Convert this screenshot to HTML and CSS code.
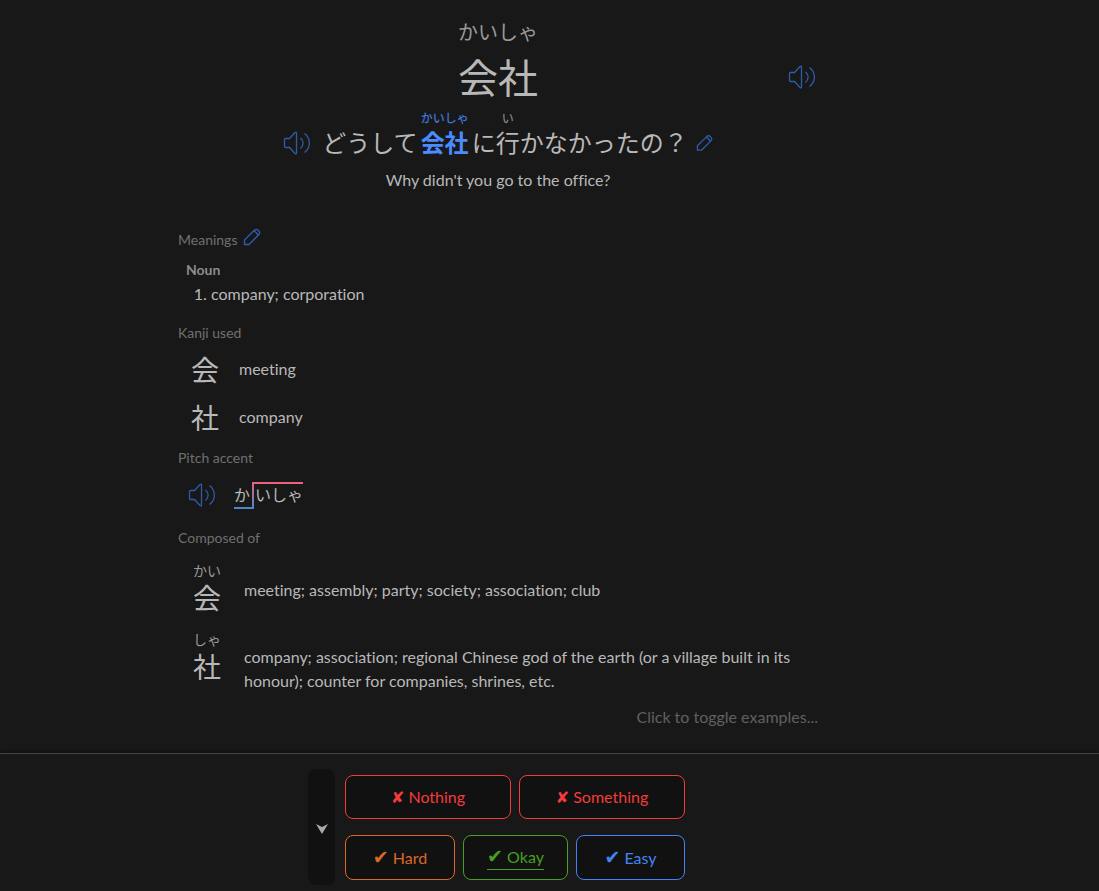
FILE: index.html
```html
<!DOCTYPE html>
<html lang="en">
<head>
<meta charset="utf-8">
<meta name="viewport" content="width=device-width, initial-scale=1">
<title>会社 – Review</title>
<link rel="stylesheet" href="styles.css">
</head>
<body>
<svg class="symbols" aria-hidden="true">
  <symbol id="speaker" viewBox="0 0 28 24"><path d="M1.500 8.500v7q0 1 1 1h4l5.500 6q1.500 1 1.500-.5v-20q0-1.500-1.500-.5l-5.500 6h-4q-1 0-1 1zM17.500 7c3.500 3 3.500 7 0 10.500M21.500 2.500c6.500 5 6.500 14 0 19"/></symbol>
  <symbol id="pencil" viewBox="0 0 18 18"><path d="M1.500 16.500v-4.500l10-10q2-1.500 4 .5t.5 4l-10 10zM10.500 3q3 .5 4.500 4.500"/></symbol>
</svg>
<main class="card">
  <header class="headword">
    <ruby class="word" lang="ja">会社<rt>かいしゃ</rt></ruby>
    <button class="icon-button headword-audio" aria-label="Play word"><svg class="speaker"><use href="#speaker"/></svg></button>
  </header>
  <div class="sentence-row">
    <button class="icon-button" aria-label="Play sentence"><svg class="speaker"><use href="#speaker"/></svg></button>
    <p class="sentence" lang="ja"><span>どうして</span><ruby class="target">会社<rt>かいしゃ</rt></ruby><span>に</span><ruby>行<rt>い</rt></ruby><span>かなかったの？</span></p>
    <button class="icon-button" aria-label="Edit sentence"><svg class="pencil"><use href="#pencil"/></svg></button>
  </div>
  <p class="translation">Why didn't you go to the office?</p>

  <section class="meanings">
    <h2 class="label">Meanings <button class="icon-button" aria-label="Edit meanings"><svg class="pencil"><use href="#pencil"/></svg></button></h2>
    <h3 class="part">Noun</h3>
    <ol class="senses"><li>company; corporation</li></ol>
  </section>

  <section class="kanji">
    <h2 class="label">Kanji used</h2>
    <div class="kanji-row"><span class="glyph" lang="ja">会</span><span>meeting</span></div>
    <div class="kanji-row"><span class="glyph" lang="ja">社</span><span>company</span></div>
  </section>

  <section class="pitch">
    <h2 class="label">Pitch accent</h2>
    <div class="pitch-row">
      <button class="icon-button" aria-label="Play pitch accent"><svg class="speaker"><use href="#speaker"/></svg></button>
      <div class="accent" lang="ja"><span class="low">か</span><span class="rise"></span><span class="high">いしゃ</span></div>
    </div>
  </section>

  <section class="composed">
    <h2 class="label">Composed of</h2>
    <div class="part-list">
      <div class="part-row"><ruby class="component" lang="ja">会<rt>かい</rt></ruby><p>meeting; assembly; party; society; association; club</p></div>
      <div class="part-row"><ruby class="component" lang="ja">社<rt>しゃ</rt></ruby><p>company; association; regional Chinese god of the earth (or a village built in its honour); counter for companies, shrines, etc.</p></div>
    </div>
  </section>
  <button class="toggle">Click to toggle examples...</button>
</main>
<footer class="review">
  <div class="review-inner">
    <button class="collapse" aria-label="More options"><svg class="chevron" viewBox="0 0 12 10"><path d="M0 0l6 3 6-3-6 10z"/></svg></button>
    <div class="grades">
      <div class="fails">
        <button class="grade fail"><span><i>✘</i> Nothing</span></button>
        <button class="grade fail"><span><i>✘</i> Something</span></button>
      </div>
      <div class="passes">
        <button class="grade hard"><span><i>✔</i> Hard</span></button>
        <button class="grade okay"><span><i>✔</i> Okay</span></button>
        <button class="grade easy"><span><i>✔</i> Easy</span></button>
      </div>
    </div>
  </div>
</footer>
</body>
</html>
```
FILE: styles.css
```css
* { box-sizing: border-box; }

body {
  margin: 0;
  min-height: 100vh;
  display: flex;
  flex-direction: column;
  background: #181818;
  color: #b8b8b8;
  font: 16px/24px Lato, "Noto Sans CJK JP", sans-serif;
  font-variant-ligatures: none;
}

h2, h3, p, ol { margin: 0; padding: 0; }

button {
  padding: 0;
  border: 0;
  background: none;
  color: inherit;
  font: inherit;
  cursor: pointer;
}

[lang="ja"] { font-family: "Noto Sans CJK JP", sans-serif; }

ruby {
  display: inline-flex;
  flex-direction: column-reverse;
  align-items: center;
}

rt { display: block; color: #999; }

.symbols { position: absolute; width: 0; height: 0; }

.icon-button { display: flex; }

.speaker, .pencil {
  fill: none;
  stroke: #2f5ba8;
}

.speaker { width: 28px; height: 24px; stroke-width: 1.3; }
.pencil { width: 18px; height: 18px; stroke-width: 1.4; }

.card {
  flex: 1;
  width: 100%;
  max-width: 640px;
  margin-left: max(0px, calc((100% - 743px) / 2));
  padding-top: 16px;
}

.headword {
  display: grid;
  grid-template-columns: 1fr auto 1fr;
  align-items: center;
}

.word { grid-column: 2; font-size: 40px; line-height: 56px; }
.word rt { font-size: 20px; line-height: 32px; }
.headword-audio { justify-self: end; padding: 34px 2px 0 0; }

.sentence-row {
  display: flex;
  justify-content: center;
  align-items: flex-end;
  gap: 8px;
  margin-top: 4px;
}

.sentence-row .icon-button { height: 34px; align-items: center; }
.sentence-row .pencil { width: 17px; }

.sentence {
  display: flex;
  align-items: flex-end;
  padding-left: 3px;
  font-size: 24px;
  line-height: 32px;
  padding-bottom: 2px;
}

.sentence rt { font-size: 12px; line-height: 16px; margin-top: 2px; }
.target { margin: 0 3px; color: #4a8cff; font-weight: 700; }
.target rt { color: #3f74d8; font-weight: 500; }

.translation { margin-top: 8px; text-align: center; }

.label {
  display: flex;
  gap: 6px;
  color: #707070;
  font-size: 14px;
  line-height: 24px;
  font-weight: 400;
}

.meanings { margin-top: 36px; }

.part {
  margin-top: 8px;
  padding-left: 8px;
  color: #8c8c8c;
  font-size: 14px;
  line-height: 20px;
}

.senses { margin-top: 2px; padding-left: 33px; }

.kanji { margin-top: 15px; }

.kanji-row { display: flex; align-items: center; gap: 20px; height: 48px; padding-left: 13px; }
.glyph { font-size: 28px; line-height: 48px; }

.pitch { margin-top: 5px; }
.pitch-row { display: flex; align-items: center; gap: 18px; height: 50px; padding-left: 10px; }
.accent { display: flex; line-height: 20px; }
.low { padding: 2px 2px 3px 0; border-bottom: 2px solid #4a86cc; }
.rise { width: 2px; background: linear-gradient(#e8637b, #4a86cc); }
.high { padding-left: 1px; border-top: 2px solid #e8637b; }

.composed { margin-top: 6px; }
.part-list { display: grid; gap: 3px; margin-top: 8px; }
.part-row { display: grid; grid-template-columns: 28px 1fr; align-items: start; gap: 23px; padding-left: 15px; }
.part-row:first-child { min-height: 66px; }
.component { font-size: 28px; line-height: 30px; }
.component rt { font-size: 14px; line-height: 24px; }
.part-row p { padding-top: 20px; }
.part-row + .part-row p { padding-top: 18px; }

.toggle { display: block; margin: 12px 0 16px auto; color: #606060; }

.review {
  border-top: 1px solid #444;
  box-shadow: 0 -1px 3px #0008;
  padding: 15px 106px 6px 0;
}

.review-inner { display: flex; justify-content: center; gap: 10px; }
.collapse { display: flex; align-items: center; justify-content: center; width: 27px; padding-top: 3px; border-radius: 8px; background: #111; }
.chevron { width: 12px; height: 10px; fill: #aaa; }
.grades { display: grid; gap: 16px; width: 340px; padding: 6px 0 5px; }
.fails, .passes { display: grid; gap: 8px; }
.fails { grid-template-columns: 1fr 1fr; }
.passes { grid-template-columns: 110fr 105fr 109fr; }

.grade { height: 44px; border: 1px solid; border-radius: 8px; background: #111; }
.passes .grade { height: 45px; }
.grade i { font-family: "DejaVu Sans", sans-serif; font-style: normal; }
.passes i { font-size: 19px; line-height: 20px; }
.fail { color: #f33b3b; }
.hard { color: #d9692a; }
.okay { color: #46a022; }
.easy { color: #4284f5; }
.okay span { display: inline-block; border-bottom: 1px solid; }
```
